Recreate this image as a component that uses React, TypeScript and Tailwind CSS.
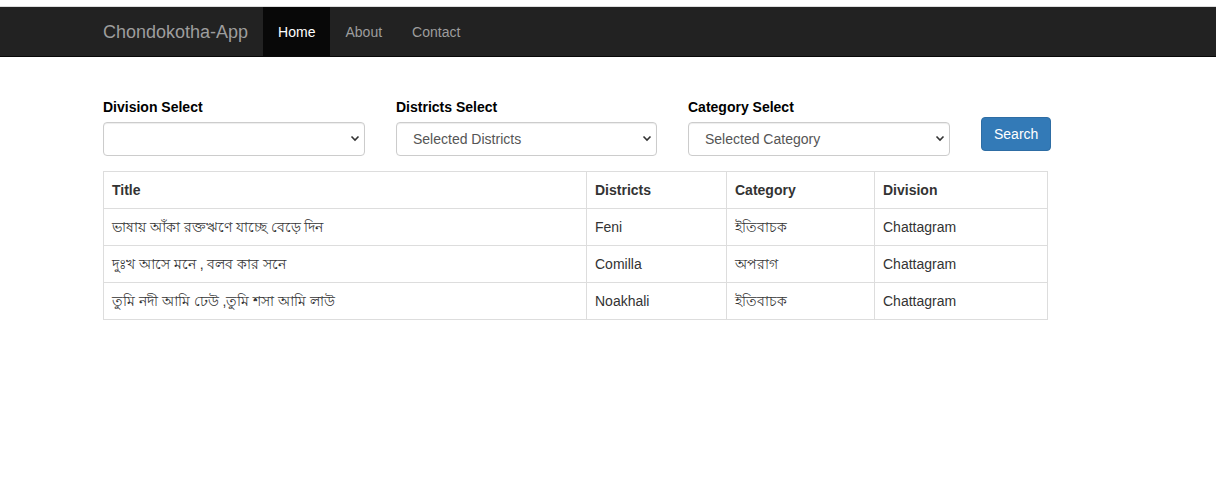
import React from 'react';

const rows = [
  { title: 'ভাষায় আঁকা রক্তঋণে যাচ্ছে বেড়ে দিন', district: 'Feni', category: 'ইতিবাচক', division: 'Chattagram' },
  { title: 'দুঃখ আসে মনে , বলব কার সনে', district: 'Comilla', category: 'অপরাগ', division: 'Chattagram' },
  { title: 'তুমি নদী আমি ঢেউ ,তুমি শসা আমি লাউ', district: 'Noakhali', category: 'ইতিবাচক', division: 'Chattagram' },
];

const Chevron = () => (
  <svg className="pointer-events-none absolute right-[5px] top-[13px]" width="10" height="7" viewBox="0 0 10 7">
    <path d="M1.5 1.5 L5 5 L8.5 1.5" fill="none" stroke="#333" strokeWidth="1.6" />
  </svg>
);

function SelectBox({ label, placeholder, width }: { label: string; placeholder: string; width: string }) {
  return (
    <div className={`flex flex-col ${width}`}>
      <label className="mb-[5px] text-[14px] font-bold leading-[20px] text-black">{label}</label>
      <div className="relative">
        <select
          className="h-[34px] w-full appearance-none rounded-[4px] border border-[#ccc] bg-white pl-[16px] text-[14px] text-[#555] shadow-[inset_0_1px_1px_rgba(0,0,0,0.075)] outline-none"
          defaultValue=""
        >
          <option value="">{placeholder}</option>
        </select>
        <Chevron />
      </div>
    </div>
  );
}

export default function App() {
  return (
    <div className="min-h-[489px] bg-white font-['Liberation_Sans','Noto_Sans',sans-serif] text-[14px] text-[#333]">
      <div className="h-[6px] bg-white" />
      <nav className="h-[51px] border-t border-[#ddd] border-b border-b-[#080808] bg-[#222]">
        <div className="flex h-[50px] items-stretch pl-[88px]">
          <span className="flex items-center px-[15px] text-[18px] text-[#9d9d9d]">Chondokotha-App</span>
          <span className="flex items-center bg-[#080808] px-[15px] text-white">Home</span>
          <span className="flex items-center px-[15px] text-[#9d9d9d]">About</span>
          <span className="flex items-center px-[15px] text-[#9d9d9d]">Contact</span>
        </div>
      </nav>

      <div className="pl-[103px] pt-[40px]">
        <div className="flex items-end gap-[31px]">
          <SelectBox label="Division Select" placeholder="" width="w-[262px]" />
          <SelectBox label="Districts Select" placeholder="Selected Districts" width="w-[261px]" />
          <SelectBox label="Category Select" placeholder="Selected Category" width="w-[262px]" />
          <button className="mb-[5px] h-[34px] rounded-[4px] border border-[#2e6da4] bg-[#337ab7] px-[12px] text-[14px] text-white">
            Search
          </button>
        </div>

        <table className="mt-[15px] w-[945px] border-collapse border border-[#ddd]">
          <thead>
            <tr className="h-[37px] text-left">
              <th className="w-[483px] border border-[#ddd] px-[8px] font-bold">Title</th>
              <th className="w-[140px] border border-[#ddd] px-[8px] font-bold">Districts</th>
              <th className="w-[148px] border border-[#ddd] px-[8px] font-bold">Category</th>
              <th className="border border-[#ddd] px-[8px] font-bold">Division</th>
            </tr>
          </thead>
          <tbody>
            {rows.map((r) => (
              <tr key={r.title} className="h-[37px]">
                <td className="border border-[#ddd] px-[8px]">{r.title}</td>
                <td className="border border-[#ddd] px-[8px]">{r.district}</td>
                <td className="border border-[#ddd] px-[8px]">{r.category}</td>
                <td className="border border-[#ddd] px-[8px]">{r.division}</td>
              </tr>
            ))}
          </tbody>
        </table>
      </div>
    </div>
  );
}
